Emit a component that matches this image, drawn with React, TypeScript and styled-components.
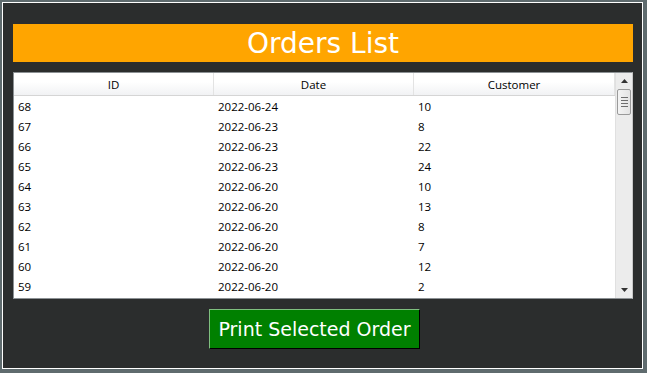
import React from "react";
import styled, { createGlobalStyle } from "styled-components";

const Global = createGlobalStyle`
  html, body { margin: 0; padding: 0; background: #5f6b6e; }
  body { width: 647px; height: 373px; overflow: hidden; }
`;

const Frame = styled.div`
  box-sizing: border-box;
  margin: 2px 4px 0 2px;
  width: 641px;
  height: 367px;
  border: 1px solid #ffffff;
  background: #2b2d2d;
  padding: 21px 9px 0 10px;
  display: flex;
  flex-direction: column;
  align-items: stretch;
`;

const Banner = styled.div`
  height: 38px;
  background: #ffa500;
  color: #ffffff;
  font-family: "DejaVu Sans", Verdana, sans-serif;
  font-size: 28px;
  display: flex;
  align-items: center;
  justify-content: center;
`;

const TableBox = styled.div`
  margin-top: 10px;
  height: 227px;
  box-sizing: border-box;
  border: 1px solid #8c9194;
  border-right-color: #c8c8c8;
  background: #ffffff;
  display: flex;
  overflow: hidden;
`;

const Grid = styled.div`
  flex: 1;
  display: flex;
  flex-direction: column;
  font-family: "Open Sans", "Segoe UI", sans-serif;
  font-size: 11.5px;
  color: #000000;
`;

const HeaderRow = styled.div`
  display: grid;
  grid-template-columns: 200px 200px 1fr;
  height: 22px;
  flex: none;
  background: linear-gradient(#ffffff 0%, #ffffff 40%, #f1f2f4 100%);
  border-bottom: 1px solid #d5d5d5;
`;

const HeaderCell = styled.div`
  display: flex;
  align-items: center;
  justify-content: center;
  border-right: 1px solid #e3e3e3;
`;

const Row = styled.div`
  display: grid;
  grid-template-columns: 200px 200px 1fr;
  height: 20px;
  flex: none;
`;

const Cell = styled.div`
  display: flex;
  align-items: center;
  padding-left: 4px;
`;

const ScrollBar = styled.div`
  width: 16px;
  border-left: 1px solid #e0e0e0;
  background: #ececec;
  display: flex;
  flex-direction: column;
  align-items: center;
`;

const Arrow = styled.div`
  height: 16px;
  width: 100%;
  display: flex;
  align-items: center;
  justify-content: center;
`;

const Thumb = styled.div`
  box-sizing: border-box;
  width: 14px;
  height: 26px;
  border: 1px solid #9a9a9a;
  border-radius: 2px;
  background: linear-gradient(90deg, #f4f4f4, #e4e4e4);
  display: flex;
  flex-direction: column;
  align-items: center;
  justify-content: center;
  gap: 2px;
`;

const Grip = styled.div`
  width: 7px;
  height: 1px;
  background: #6e6e6e;
`;

const Spacer = styled.div`
  flex: 1;
`;

const Footer = styled.div`
  display: flex;
  justify-content: center;
  padding-top: 10px;
  padding-right: 17px;
`;

const PrintButton = styled.button`
  box-sizing: border-box;
  width: 211px;
  height: 40px;
  background: #008000;
  color: #ffffff;
  font-family: "DejaVu Sans", Verdana, sans-serif;
  font-size: 19px;
  border: 1px solid;
  border-color: #7fbf7f #000000 #000000 #7fbf7f;
  padding: 0;
  cursor: pointer;
`;

const orders = [
  ["68", "2022-06-24", "10"],
  ["67", "2022-06-23", "8"],
  ["66", "2022-06-23", "22"],
  ["65", "2022-06-23", "24"],
  ["64", "2022-06-20", "10"],
  ["63", "2022-06-20", "13"],
  ["62", "2022-06-20", "8"],
  ["61", "2022-06-20", "7"],
  ["60", "2022-06-20", "12"],
  ["59", "2022-06-20", "2"],
];

export default function App() {
  return (
    <>
      <Global />
      <Frame>
        <Banner>Orders List</Banner>
        <TableBox>
          <Grid>
            <HeaderRow>
              <HeaderCell>ID</HeaderCell>
              <HeaderCell>Date</HeaderCell>
              <HeaderCell>Customer</HeaderCell>
            </HeaderRow>
            {orders.map((o) => (
              <Row key={o[0]}>
                <Cell>{o[0]}</Cell>
                <Cell>{o[1]}</Cell>
                <Cell>{o[2]}</Cell>
              </Row>
            ))}
          </Grid>
          <ScrollBar>
            <Arrow>
              <svg width="7" height="4" viewBox="0 0 7 4">
                <path d="M3.5 0 L7 4 L0 4 Z" fill="#333" />
              </svg>
            </Arrow>
            <Thumb>
              <Grip />
              <Grip />
              <Grip />
              <Grip />
            </Thumb>
            <Spacer />
            <Arrow>
              <svg width="7" height="4" viewBox="0 0 7 4">
                <path d="M0 0 L7 0 L3.5 4 Z" fill="#333" />
              </svg>
            </Arrow>
          </ScrollBar>
        </TableBox>
        <Footer>
          <PrintButton>Print Selected Order</PrintButton>
        </Footer>
      </Frame>
    </>
  );
}
